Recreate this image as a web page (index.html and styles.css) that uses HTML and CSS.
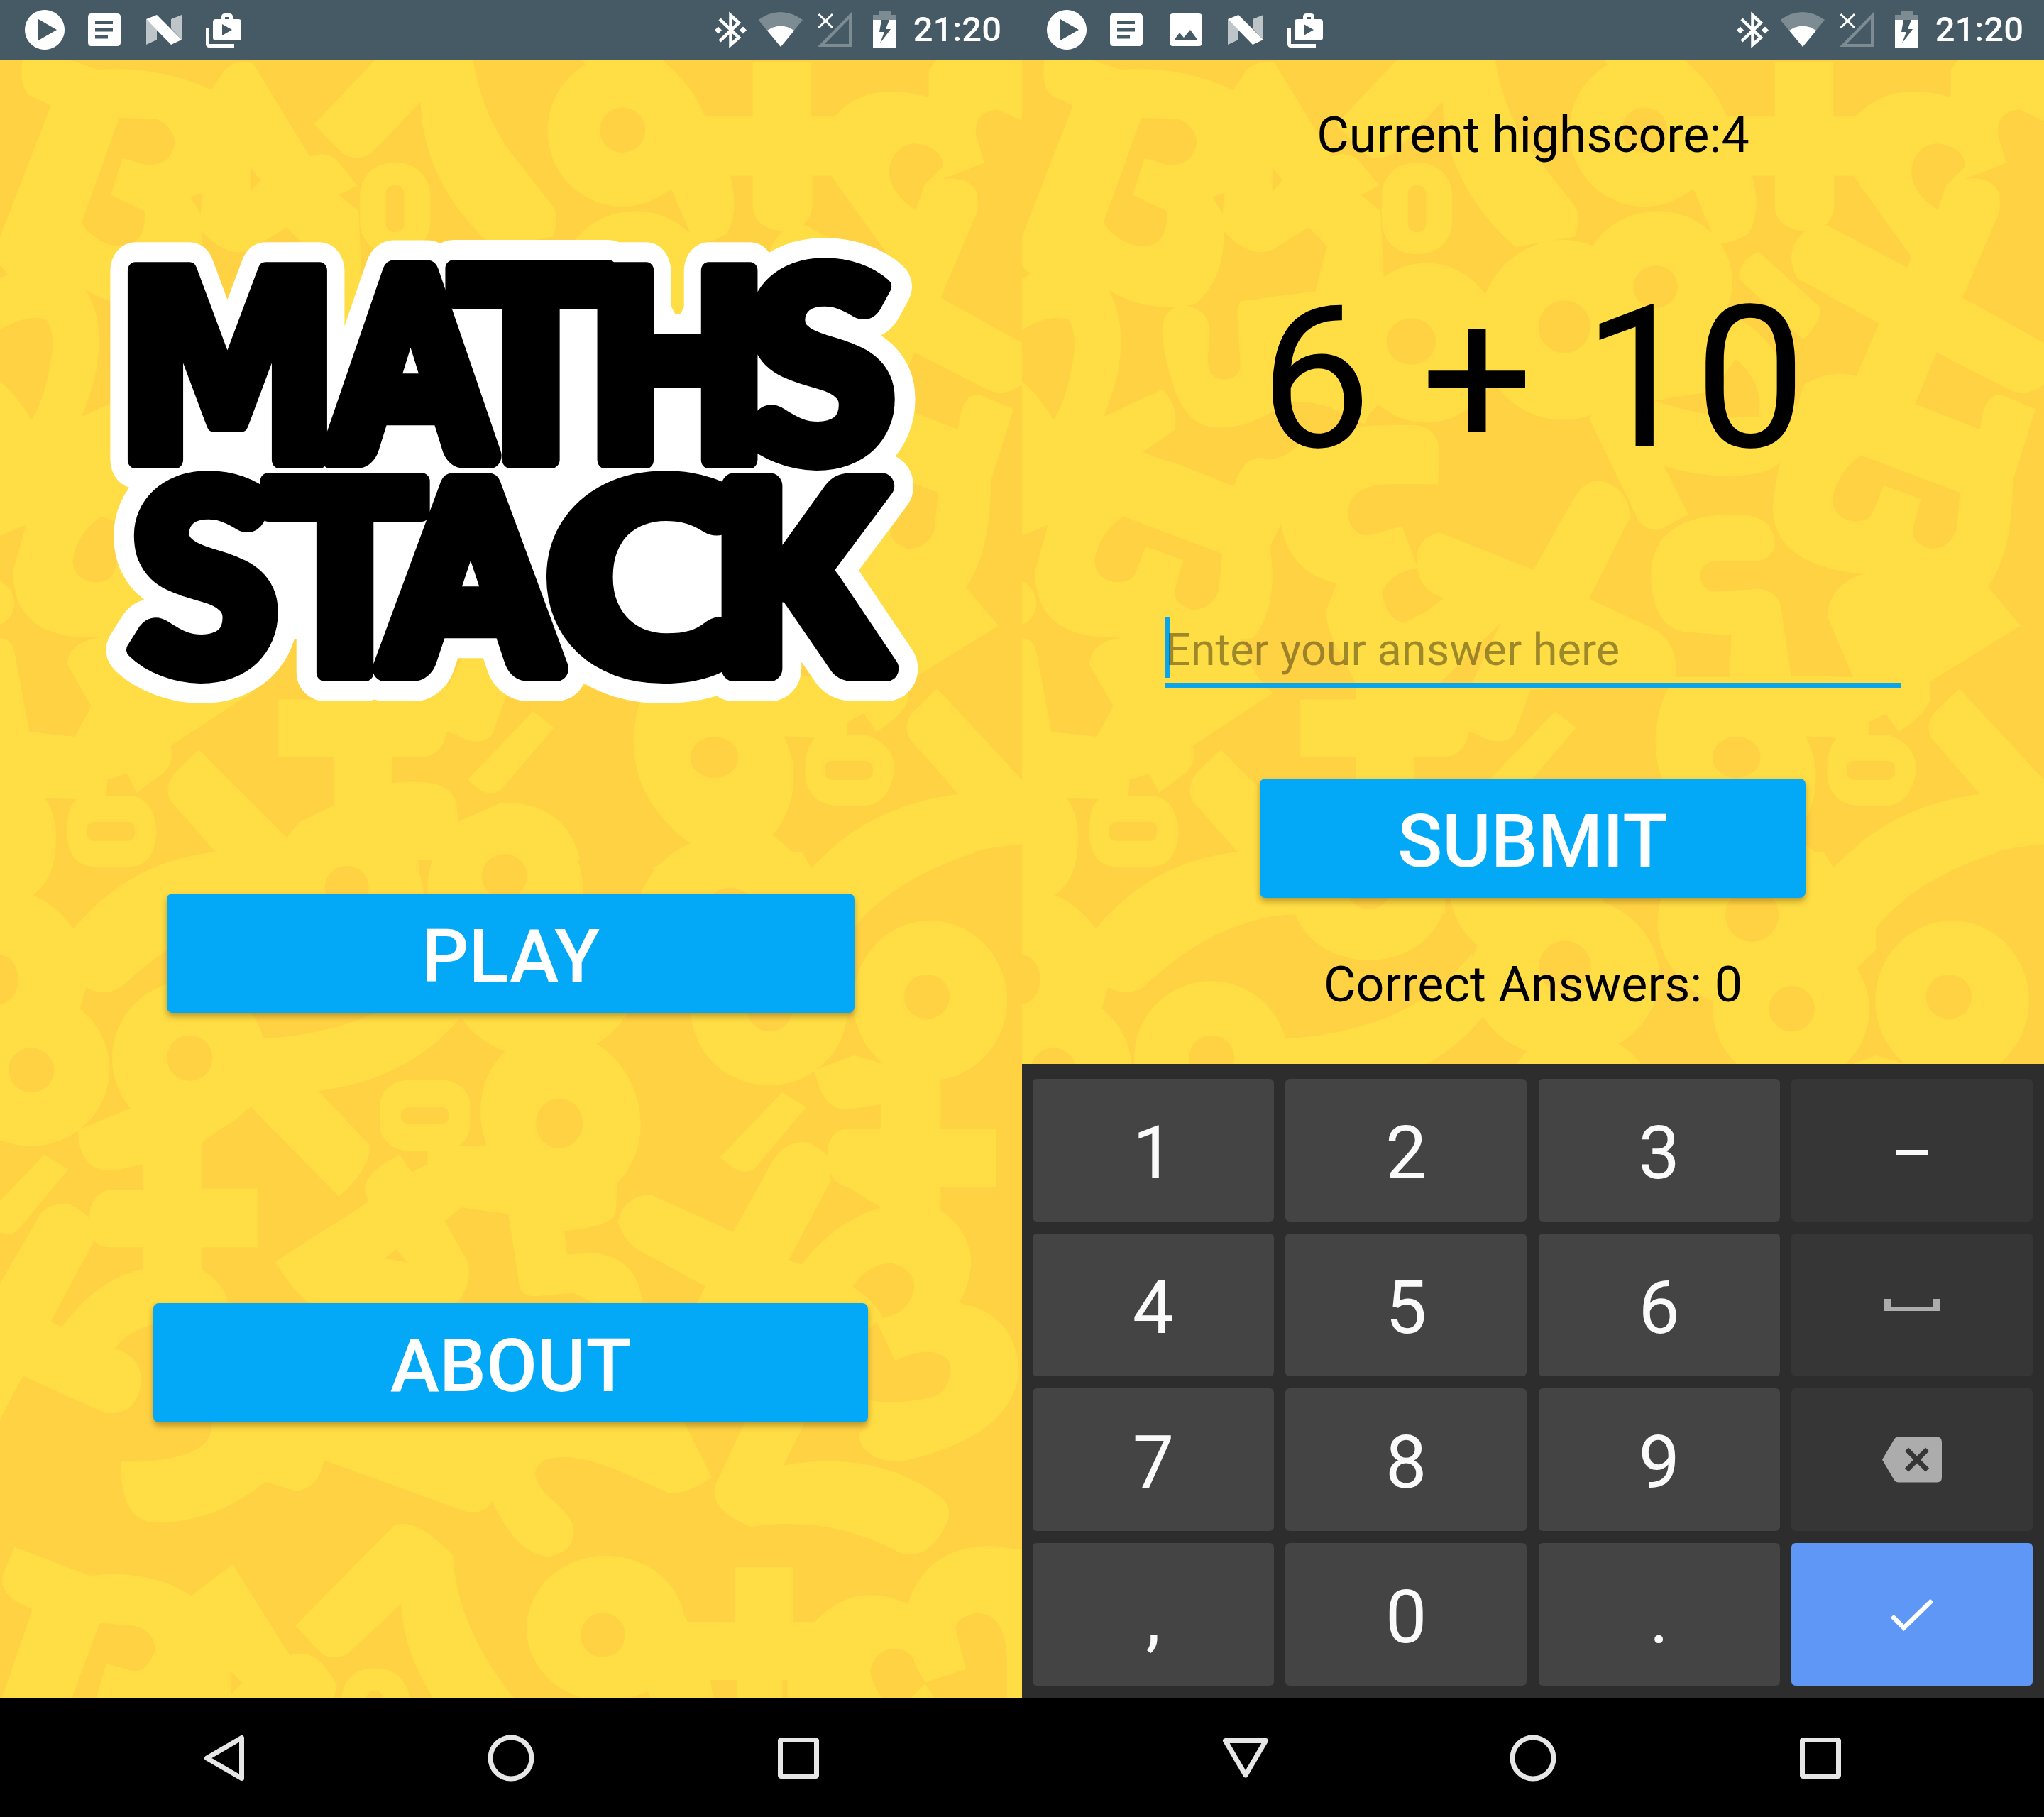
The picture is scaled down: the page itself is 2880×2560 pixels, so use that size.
FILE: index.html
```html
<!DOCTYPE html>
<html lang="en">
<head>
<meta charset="utf-8">
<title>Maths Stack</title>
<link rel="stylesheet" href="styles.css">
</head>
<body>
<svg class="sprite" width="0" height="0" aria-hidden="true">
  <symbol id="i-play" viewBox="21 0 84 84"><path fill-rule="evenodd" d="M63 14a28 28 0 1 0 .01 0ZM54 27L80 42L54 57Z"/></symbol>
  <symbol id="i-article" viewBox="105 0 84 84"><path fill-rule="evenodd" d="M129 19h36q5 0 5 5v36q0 5-5 5h-36q-5 0-5-5v-36q0-5 5-5ZM134 29v5h25v-5ZM134 39.500v5h25v-5ZM134 49.500v5h18v-5Z"/></symbol>
  <symbol id="i-image" viewBox="189 0 84 84"><path fill-rule="evenodd" d="M213 19h36q5 0 5 5v36q0 5-5 5h-36q-5 0-5-5v-36q0-5 5-5ZM214 57h34l-11-15-9 11-6-7Z"/></symbol>
  <symbol id="i-n" viewBox="189 0 84 84"><path opacity=".65" d="M206 27l15 15v14l-15 7ZM241 27l15-6v35l-15-16Z"/><path d="M206 27l15-6 35 35-15 7Z"/></symbol>
  <symbol id="i-bag" viewBox="273 0 84 84"><path d="M290 39h5v23h35v5h-35q-5 0-5-5Z"/><path fill-rule="evenodd" d="M304 27h8v-3q0-5 5-5h6q5 0 5 5v3h8q4 0 4 4v22q0 4-4 4h-32q-4 0-4-4v-22q0-4 4-4ZM317 24v3h6v-3ZM313 34v16l14-8Z"/></symbol>
  <symbol id="i-bt" viewBox="993 0 70 84"><path fill="none" stroke="#fff" stroke-width="4.500" d="M1013 27l27 26-11.500 10V21.500L1040 32l-27 26"/><path d="M1011 37.500l5 5-5 5-5-5ZM1046 37.500l5 5-5 5-5-5Z"/></symbol>
  <symbol id="i-wifi" viewBox="1063 0 70 84"><path opacity=".3" d="M1067.500 28q31-22 62.500 0L1099 66Z"/><path d="M1080 43q19-13 38 0L1099 66Z"/></symbol>
  <symbol id="i-signal" viewBox="1133 0 70 84"><path opacity=".3" fill-rule="evenodd" d="M1199 17v49h-48ZM1195 27v35h-34Z"/><path fill="none" stroke="#fff" stroke-width="3" d="M1152.500 20l19.500 19M1172 20l-19.500 19"/></symbol>
  <symbol id="i-batt" viewBox="1210 0 70 84"><path opacity=".3" d="M1229 28v-7h8v-5h17v5h8v7Z"/><path fill-rule="evenodd" d="M1229 28h12l-3 17h7l-6 16 15-20h-7l5-13h10v39h-33Z"/></symbol>

  <symbol id="wallpaper" viewBox="0 84 1440 2308">
    <g transform="translate(0 80) scale(.9184 .9056)">
      <path d="M35 0H95L150 20Q240 12 325 52L330 270L310 272Q310 350 265 385Q190 400 132 362Q175 440 125 560L215 518Q240 540 235 580L185 615L325 668H0V345L12 338L0 325V280L78 76L45 60Q28 45 35 0Z"/>
      <path d="M0 630H230L325 668Q400 640 400 722L380 762Q395 850 355 905L335 905Q350 960 385 990L262 1072Q268 1100 250 1115L210 1145L195 1115L165 1125L163 1150H205Q240 1160 240 1210Q235 1260 200 1260H140Q103 1255 103 1205Q103 1165 118 1155L68 1153Q90 1180 85 1235Q75 1280 52 1303H0V905Q18 905 22 925L45 1050L115 1058L140 1010L103 945Q105 910 155 903L130 903Q20 900 20 800L40 728L0 745Z"/>
      <circle cx="-15" cy="850" r="37"/>
      <path d="M325 50L345 20Q365 2 388 10L475 155Q505 145 520 165L548 200L520 215L550 240L555 345L630 440L530 560L525 572Q440 520 395 545Q350 577 300 577Q250 575 232 510Q215 460 215 420Q220 385 255 388Q288 395 288 430L285 470Q285 502 310 502Q335 500 335 480L330 395L335 380L450 365L468 295L440 265L385 300Q350 315 310 272Z"/>
      <rect x="552" y="165" width="108" height="142" rx="50"/>
      <path d="M580 0H725Q740 100 800 170L850 235Q858 250 848 280L757 296Q650 200 645 70L570 150Q545 165 525 150L482 105Z"/>
      <ellipse cx="620" cy="445" rx="115" ry="124"/><ellipse cx="830" cy="425" rx="130" ry="140"/><ellipse cx="975" cy="350" rx="115" ry="110"/>
      <ellipse cx="955" cy="115" rx="115" ry="118"/>
      <path d="M890 0H1010Q1060 40 1082 93H1155V8H1245V93H1280Q1330 35 1425 63V20L1440 0H1568V100L1530 82Q1495 85 1497 120L1510 165L1447 190Q1490 185 1500 215V240L1443 375L1568 445V510Q1540 530 1515 518L1403 460L1370 540L1470 580Q1475 520 1505 527L1555 548L1520 660Q1520 770 1482 825L1532 885L1393 972V1000Q1390 1020 1345 1050L1325 1022L1300 1035V1055H1330Q1372 1070 1372 1110Q1365 1160 1330 1165H1280Q1235 1160 1235 1110Q1235 1075 1250 1060L1202 1057Q1225 1100 1215 1150Q1205 1190 1185 1210L1245 1263H1000L1065 1228Q970 1160 972 1060Q975 1000 1003 965H1275L1235 870Q1240 820 1290 805Q1150 790 1152 700Q1155 640 1200 510Q1240 485 1280 497L1315 415L1190 345Q1165 300 1205 268L1235 262L1358 328L1365 312L1275 185H1246V235Q1240 272 1200 272Q1157 265 1155 235V185H1120Q1135 240 1115 275Q1090 292 1065 290L1030 205Z"/>
      <path d="M1130 303L1225 390Q1225 415 1198 440L1100 345Q1100 315 1130 303Z"/>
      <path d="M870 562L945 720Q960 740 980 735L1022 712L985 637Q1060 660 1130 648Q1190 635 1187 545Q1170 440 1085 400L960 450Z"/>
      <path d="M965 800Q970 710 1100 712Q1155 715 1155 760Q1150 785 1120 785H1060Q1040 790 1040 810Q1045 832 1065 832L1130 828Q1160 830 1165 860L1180 963L1275 965V1000H1085L1088 900L1020 895Q965 890 965 800Z"/>
      <path d="M325 668Q340 620 370 624Q400 632 430 597Q480 570 600 573Q640 575 640 615L638 665H560Q498 668 500 715Q508 748 535 744L583 730L607 795Q600 750 640 740L785 798L845 690Q865 655 890 660Q935 675 932 718L870 843L975 893Q1010 920 1003 975L780 985L755 1055Q735 1075 700 1055L685 1050Q680 1090 640 1090H602V1130Q690 1120 700 1160L703 1190L770 1160Q870 1160 890 1250H512V1230H440V1215L460 1190L512 1165V1090H427V1000H512V975L490 930Q465 890 467 860L483 820Q405 800 397 722Z"/>
      <path d="M818 1018L850 1044L768 1141Q745 1155 718 1124Z"/>
      <path d="M335 1242L262 1158Q250 1135 270 1112L305 1078L470 1245Z"/>
      <path d="M1185 1300L1245 1263Q1330 1165 1470 1147L1395 1060Q1385 1040 1400 1020L1438 983L1568 1125V1225Q1450 1235 1370 1290Z"/>
      <g class="hole">
        <path d="M183 95L240 97Q268 110 268 135Q262 170 225 168L188 158L170 215L222 240Q225 290 190 295Q150 295 125 258Z"/>
        <path d="M0 425Q40 400 70 408Q88 430 75 490Q65 540 48 565Q25 525 0 505Z"/>
        <path id="notch" d="M155 715L307 773L302 830Q290 862 260 860Q230 850 235 828L247 783L190 762L173 805Q165 820 140 817Q110 810 112 780Q120 740 155 715Z"/>
        <use href="#notch" x="1132" y="-95"/>
        <rect x="133" y="1190" width="74" height="30" rx="12"/><rect x="1265" y="1095" width="74" height="30" rx="12"/>
        <path d="M384 172L400 192L384 210ZM292 218L310 212L308 245Z"/>
        <rect x="592" y="200" width="28" height="73" rx="13"/>
        <ellipse cx="597" cy="443" rx="38" ry="36"/><ellipse cx="832" cy="420" rx="40" ry="41"/><ellipse cx="972" cy="358" rx="34" ry="33"/>
        <ellipse cx="955" cy="114" rx="35" ry="35"/>
        <path d="M1405 135Q1445 140 1447 170L1418 200L1405 238Q1360 210 1365 170Q1375 135 1405 135Z"/>
        <path d="M970 535Q1060 565 1130 560Q1140 510 1095 470L1060 520Z"/>
        <path d="M607 795Q560 805 552 835Q560 875 585 880Q615 870 647 842Q610 830 607 795ZM735 880L640 975H690Z"/>
        <ellipse cx="1096" cy="1090" rx="37" ry="32"/>
      </g>
    </g>
    <g transform="translate(0 1200) scale(.9184 .7653)">
      <path d="M0 0H85Q80 55 50 80Q85 95 113 142Q200 15 335 0H640L650 115H420Q300 120 190 245Q165 270 132 250L122 290Q170 350 168 410L0 500Z"/>
      <ellipse cx="47" cy="400" rx="121" ry="142"/><ellipse cx="290" cy="380" rx="118" ry="142"/>
      <ellipse cx="532" cy="80" rx="118" ry="120"/><ellipse cx="775" cy="65" rx="119" ry="140"/><ellipse cx="833" cy="230" rx="145" ry="150"/>
      <ellipse cx="860" cy="490" rx="122" ry="160" transform="rotate(-8 860 490)"/>
      <ellipse cx="1120" cy="130" rx="145" ry="160"/><ellipse cx="1180" cy="290" rx="120" ry="140"/><ellipse cx="1427" cy="274" rx="118" ry="147"/>
      <path d="M985 80Q1020 10 1040 0H1230L1245 31Q1250 20 1275 0H1500Q1370 50 1310 140V180L1260 240Q1200 80 985 80Z"/>
      <path d="M405 344Q600 330 690 187L710 300Q630 420 488 440L567 540Q570 580 520 635L385 470L290 450Z"/>
      <path d="M205 470L120 512Q120 590 175 587L220 575V622H170Q137 630 137 675Q110 640 85 650Q65 655 58 675L0 795V1045L35 965L160 1033Q215 1040 217 965Q210 925 175 915Q200 880 235 870V831H350Q345 795 310 770V728H395V620H310V535L385 470ZM137 675L145 715Q150 728 170 728H220V768Q150 785 95 875L78 865L145 715Z"/>
      <path id="dash" d="M1200 443L1237 470L1160 580Q1140 605 1105 562Z"/><use href="#dash" x="-1132" y="115"/>
      <rect x="583" y="420" width="138" height="131" rx="45"/>
      <path d="M656 545V575L632 590L613 558Q560 590 560 620L565 645L422 755Q450 810 475 831H700Q725 800 718 755L682 680L708 655L780 667L797 800Q800 820 825 818L880 812L912 831H985Q980 745 905 738L870 742L866 698Q945 690 945 660L947 600L750 540Z"/>
      <path d="M1310 375L1250 402Q1260 475 1300 475L1352 465V510H1300Q1268 515 1270 560Q1245 530 1225 535Q1200 540 1185 570L1125 700L1000 632Q960 630 948 680Q955 710 975 730L1082 800L1070 831V900H1332V1060L1318 1070Q1318 1120 1380 1123Q1550 1080 1563 960Q1560 850 1470 830Q1485 810 1490 760Q1490 700 1443 660V617H1528V510H1443V420ZM1270 560L1275 605L1210 752L1230 760Q1280 680 1352 655V617H1300Q1270 610 1270 560Z" fill-rule="evenodd"/>
      <path d="M1352 510V655L1300 617Q1270 610 1270 560Q1268 515 1300 510Z"/>
      <path d="M325 1050Q330 1125 185 1123Q185 1235 240 1235Q330 1235 407 1160L455 1177Q490 1170 497 1120L715 1215Q745 1220 755 1195Q790 1290 840 1298Q885 1290 880 1240Q870 1215 835 1180Q805 1135 840 1118Q880 1105 950 1140L1025 1180Q1050 1185 1092 1152L1050 1050Z"/>
      <path d="M1143 1050L1098 1165Q1085 1210 1152 1243Q1270 1220 1380 1290Q1425 1310 1455 1230Q1460 1200 1440 1185Q1340 1100 1202 1130L1235 1050Z"/>
      <path d="M22 1280L138 1333Q230 1320 293 1370L357 1312L445 1480Q485 1460 517 1535L510 1568H0L50 1395Q-5 1370 5 1330Z"/>
      <path d="M605 1240Q640 1225 695 1295Q700 1430 795 1568H670Q620 1480 615 1385L535 1475Q515 1490 495 1478L453 1425Z"/>
      <path d="M523 1568Q525 1505 575 1503Q625 1505 630 1568Z"/>
      <ellipse cx="930" cy="1430" rx="122" ry="134"/>
      <path d="M930 1296Q1010 1310 1055 1418H1127V1317H1217V1418H1250Q1310 1340 1393 1385Q1420 1280 1520 1278L1568 1285V1568H1545V1480Q1540 1400 1498 1402Q1460 1410 1468 1440L1482 1505L1418 1530L1440 1568H1208V1525H1200V1568H1130V1525H1090L1095 1568H1000Z"/>
      <g class="hole">
        <ellipse cx="0" cy="235" rx="28" ry="45"/><ellipse cx="48" cy="402" rx="35" ry="41"/><ellipse cx="291" cy="380" rx="35" ry="42"/>
        <ellipse cx="532" cy="66" rx="34" ry="40"/><ellipse cx="774" cy="45" rx="35" ry="41"/><ellipse cx="833" cy="212" rx="40" ry="48"/>
        <ellipse cx="858" cy="500" rx="36" ry="46"/><ellipse cx="1120" cy="116" rx="41" ry="50"/><ellipse cx="1181" cy="289" rx="35" ry="42"/>
        <ellipse cx="1422" cy="267" rx="35" ry="41"/><rect x="615" y="470" width="74" height="32" rx="14"/>
        <path d="M588 750L608 732L625 757Q600 748 588 750Z"/>
        <path d="M1308 800Q1335 755 1370 758Q1405 770 1402 805Q1395 850 1355 858Q1340 825 1308 800ZM1345 865L1373 937Q1430 905 1455 935Q1465 970 1440 1000Q1390 1020 1332 1010V880Z"/>
        <path d="M153 1420L205 1425Q238 1435 238 1470Q225 1515 200 1507L163 1495L145 1568H107ZM355 1510L371 1530L355 1550Z"/>
        <ellipse cx="575" cy="1562" rx="14" ry="18"/><ellipse cx="925" cy="1442" rx="34" ry="41"/>
        <path d="M1335 1510Q1340 1468 1375 1467Q1400 1470 1405 1500L1420 1530L1390 1568H1360Q1340 1540 1335 1510Z"/>
      </g>
    </g>
  </symbol>
</svg>

<main class="device-pair">
  <section class="screen">
    <header class="status">
      <svg class="tray"><use href="#i-play"/></svg>
      <svg class="tray"><use href="#i-article"/></svg>
      <svg class="tray"><use href="#i-n"/></svg>
      <svg class="tray"><use href="#i-bag"/></svg>
      <div class="system">
        <svg class="sys"><use href="#i-bt"/></svg>
        <svg class="sys"><use href="#i-wifi"/></svg>
        <svg class="sys"><use href="#i-signal"/></svg>
        <svg class="sys sys-battery"><use href="#i-batt"/></svg>
        <span class="clock">21:20</span>
      </div>
    </header>
    <div class="app">
      <svg class="wallpaper"><use href="#wallpaper"/></svg>
      <div class="home">
        <svg class="logo" viewBox="130 310 1180 700" role="img" aria-label="Maths Stack">
          <defs>
            <g id="wordmark">
              <text y="648"><tspan class="square" x="161" textLength="319" lengthAdjust="spacingAndGlyphs">M</tspan><tspan class="heavy" x="469" y="642" textLength="219" lengthAdjust="spacingAndGlyphs">A</tspan><tspan x="634" y="648" textLength="228" lengthAdjust="spacingAndGlyphs">T</tspan><tspan class="square" x="823" textLength="263" lengthAdjust="spacingAndGlyphs">H</tspan><tspan x="1050" textLength="211" lengthAdjust="spacingAndGlyphs">S</tspan></text>
              <text y="948"><tspan x="183" textLength="209" lengthAdjust="spacingAndGlyphs">S</tspan><tspan x="373" textLength="226" lengthAdjust="spacingAndGlyphs">T</tspan><tspan class="heavy" x="545" y="942" textLength="236" lengthAdjust="spacingAndGlyphs">A</tspan><tspan x="769" y="948" textLength="283" lengthAdjust="spacingAndGlyphs">C</tspan><tspan class="heavy" x="1008" y="942" textLength="237" lengthAdjust="spacingAndGlyphs">K</tspan></text>
            </g>
          </defs>
          <path fill="#fff" d="M260 490H380V590H480L560 480L640 440H920V380L955 450L990 380V500H1110L1150 590H1220V700L1195 810L1215 900H240V700H220V600H260Z"/>
          <use class="logo-outline" href="#wordmark"/>
          <use class="logo-face" href="#wordmark"/>
        </svg>
        <button class="btn btn-play">PLAY</button>
        <button class="btn btn-about">ABOUT</button>
      </div>
    </div>
    <nav class="nav">
      <svg viewBox="0 0 80 80"><path d="M65.500 11.500v57L16.500 40Z"/></svg>
      <svg viewBox="0 0 80 80"><circle cx="40" cy="40" r="29"/></svg>
      <svg viewBox="0 0 80 80"><rect x="14.500" y="14.500" width="51" height="51" rx="1"/></svg>
    </nav>
  </section>

  <section class="screen">
    <header class="status">
      <svg class="tray"><use href="#i-play"/></svg>
      <svg class="tray"><use href="#i-article"/></svg>
      <svg class="tray"><use href="#i-image"/></svg>
      <svg class="tray"><use href="#i-n"/></svg>
      <svg class="tray"><use href="#i-bag"/></svg>
      <div class="system">
        <svg class="sys"><use href="#i-bt"/></svg>
        <svg class="sys"><use href="#i-wifi"/></svg>
        <svg class="sys"><use href="#i-signal"/></svg>
        <svg class="sys sys-battery"><use href="#i-batt"/></svg>
        <span class="clock">21:20</span>
      </div>
    </header>
    <div class="app">
      <svg class="wallpaper"><use href="#wallpaper"/></svg>
      <div class="game">
        <p class="score">Current highscore:4</p>
        <p class="question">6 + 10</p>
        <div class="answer"><span class="placeholder">Enter your answer here</span></div>
        <button class="btn btn-submit">SUBMIT</button>
        <p class="correct">Correct Answers: 0</p>
      </div>
      <div class="keyboard">
        <span class="key">1</span><span class="key">2</span><span class="key">3</span>
        <span class="key key-fn"><svg viewBox="0 0 90 70"><path fill="#fafafa" d="M23 34h44v8H23z"/></svg></span>
        <span class="key">4</span><span class="key">5</span><span class="key">6</span>
        <span class="key key-fn"><svg viewBox="0 0 90 70"><path d="M6 26h9v11h60V26h9v17H6z"/></svg></span>
        <span class="key">7</span><span class="key">8</span><span class="key">9</span>
        <span class="key key-fn"><svg viewBox="0 0 90 70"><path fill-rule="evenodd" d="M26 2.500h54q7 0 7 7v50q0 7-7 7H26q-4 0-6-3L3 34.500L20 5.500q2-3 6-3ZM40 17.500l-5 5 12 12-12 12 5 5 12-12 12 12 5-5-12-12 12-12-5-5-12 12Z"/></svg></span>
        <span class="key">,</span><span class="key">0</span><span class="key">.</span>
        <span class="key key-enter"><svg viewBox="0 0 90 70"><path d="M17 37l16.500 16.500L73 15" fill="none" stroke="#fff" stroke-width="6.500"/></svg></span>
      </div>
    </div>
    <nav class="nav">
      <svg viewBox="0 0 80 80"><path d="M11.500 15.500h57L40 64Z"/></svg>
      <svg viewBox="0 0 80 80"><circle cx="40" cy="40" r="29"/></svg>
      <svg viewBox="0 0 80 80"><rect x="14.500" y="14.500" width="51" height="51" rx="1"/></svg>
    </nav>
  </section>
</main>
</body>
</html>
```
FILE: styles.css
```css
* { box-sizing: border-box; }
body { margin: 0; background: #000; font-family: Roboto, "Liberation Sans", sans-serif; }
p { margin: 0; }
svg { display: block; }
.sprite { position: absolute; }

.device-pair { display: flex; width: 2880px; height: 2560px; }
.screen { display: flex; flex-direction: column; width: 1440px; height: 2560px; overflow: hidden; }

.status { display: flex; align-items: center; height: 84px; padding: 0 29px 0 21px; background: #455a64; color: #fff; }
.status svg { fill: #fff; }
.tray { width: 84px; height: 84px; }
.system { display: flex; align-items: center; margin-left: auto; }
.sys { width: 70px; height: 84px; }
.sys-battery { margin-left: 7px; }
.clock { margin-left: 6px; font-size: 49px; font-weight: 500; line-height: 88px; }

.app { position: relative; display: flex; flex-direction: column; height: 2308px; background: #ffd244; }
.wallpaper { position: absolute; inset: 0; width: 1440px; height: 2308px; fill: #ffdd44; }
.hole { fill: #ffd244; }

.home, .game { position: relative; display: flex; flex-direction: column; align-items: center; }
.home { padding: 226px 1px 0 0; }
.logo { width: 1180px; height: 700px; overflow: visible; font-family: Lato, sans-serif; font-size: 372px; font-weight: 900; stroke-linejoin: round; }
.logo text, .logo tspan { stroke-width: var(--rim); }
.logo .square { font-family: "DejaVu Sans", sans-serif; font-size: 366px; font-weight: 700; }
.logo .heavy { font-size: 355px; stroke-width: calc(var(--rim) + 12px); }
.logo-outline { --rim: 80px; fill: #fff; stroke: #fff; }
.logo-face { --rim: 24px; fill: #000; stroke: #000; }

.btn { height: 168px; padding: 10px 0 0; border: 0; border-radius: 8px; background: #03a9f7; box-shadow: 0 5px 8px rgba(90, 60, 0, .4); color: #fff; font: 500 104.500px/1 Roboto, sans-serif; text-align: center; }
.btn-play { width: 969px; margin-top: 249px; }
.btn-about { width: 1007px; margin-top: 409px; }

.game { height: 1415px; color: #000; }
.score { margin-top: 64px; font-size: 70px; line-height: 84px; }
.question { margin-top: 136px; font-size: 280px; line-height: 330px; }
.answer { width: 1036px; height: 99px; margin-top: 172px; border-bottom: 7px solid #0ba5ec; }
.placeholder { display: block; height: 85px; border-left: 7px solid #0ba5ec; font-size: 63px; line-height: 92px; color: rgba(0, 0, 0, .38); text-indent: -7px; }
.btn-submit { width: 769px; margin: 128px 1px 0 0; }
.correct { margin-top: 80px; font-size: 70px; line-height: 84px; }

.keyboard { position: relative; display: grid; grid-template-columns: repeat(4, 1fr); grid-auto-rows: 201px; gap: 17px 16.600px; height: 893px; padding: 21px 16px 17px 15px; background: #2d2d2d; }
.key { display: flex; align-items: center; justify-content: center; padding-top: 8px; border-radius: 6px; background: #444; color: #fafafa; font-size: 104px; line-height: 1; }
.key svg { width: 90px; height: 70px; fill: #acacac; }
.key-fn { padding-top: 0; background: #363636; }
.key-enter { padding-top: 0; background: #5e97f6; }

.nav { display: flex; align-items: center; justify-content: space-between; height: 168px; padding: 1px 275px 0 275px; background: #000; }
.nav svg { width: 80px; height: 80px; fill: none; stroke: #e6e6e6; stroke-width: 7; stroke-linejoin: round; }
```
